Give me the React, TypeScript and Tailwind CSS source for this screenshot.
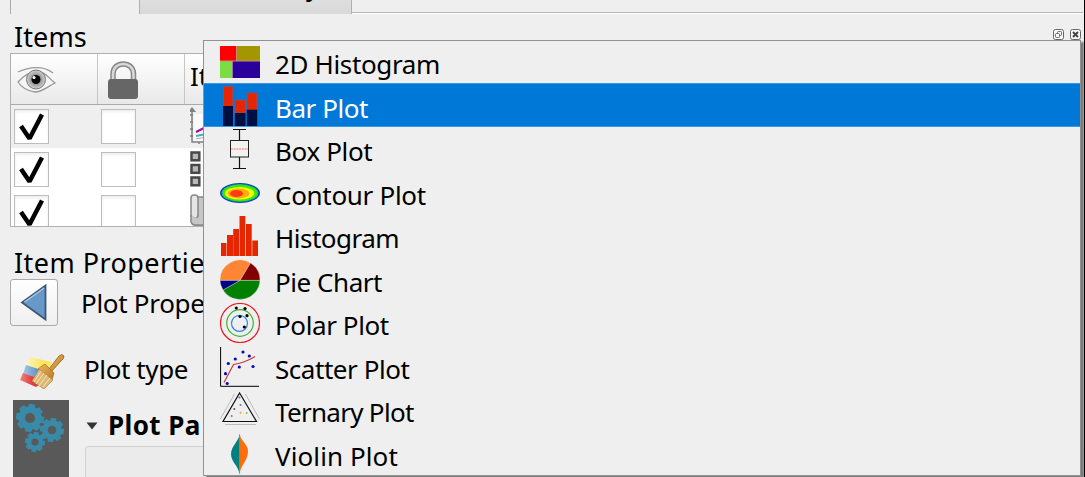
import type { ReactNode } from 'react';

function Icon({ children }: { children: ReactNode }) {
  return (
    <svg width="40" height="40" viewBox="0 0 40 40" className="mt-px shrink-0" fill="none">
      {children}
    </svg>
  );
}

const histogram2d = (
  <Icon>
    <rect y="4" width="40" height="32" fill="#c98c70" />
    <rect y="4" width="16" height="14.5" fill="#ff0000" />
    <rect x="17" y="4" width="23" height="14.5" fill="#a39600" />
    <rect y="19.5" width="11.7" height="16.5" fill="#79dd43" />
    <rect x="11.7" y="19.5" width="1" height="16.5" fill="#c8b5cc" />
    <rect x="12.7" y="19.5" width="27.3" height="16.5" fill="#29009c" />
  </Icon>
);
const bar = (
  <Icon>
    <g fill="#e52600" stroke="#95506a" strokeWidth=".7">
      <rect x="3.3" y=".4" width="9.5" height="20" />
      <rect x="15" y="14" width="10.3" height="13" />
      <rect x="27" y="7" width="10" height="17" />
    </g>
    <g fill="#000f42">
      <rect x="3" y="20" width="10" height="20" />
      <rect x="14.8" y="27" width="10.7" height="13" />
      <rect x="26.8" y="23.7" width="10.4" height="16.3" />
    </g>
  </Icon>
);
const box = (
  <Icon>
    <path d="M13 .5h13M19.5 .5v11M19.5 28v11.500M13 39.500h13" stroke="#111" strokeWidth="1.2" />
    <rect x="10.500" y="11.500" width="18" height="16.500" fill="#f4f1f1" stroke="#222" />
    <path d="M11 27.500h17" stroke="#888" />
    <path d="M11 20h17" stroke="#ff7777" strokeDasharray="2.200 .5" />
  </Icon>
);
const contour = (
  <Icon>
    <ellipse cx="20" cy="20" rx="20" ry="10" fill="#173bb5" />
    <ellipse cx="20" cy="20" rx="18.500" ry="8.900" fill="#16b989" />
    <ellipse cx="20" cy="20" rx="17.300" ry="8.200" fill="#30ee00" />
    <ellipse cx="19.600" cy="20.300" rx="14.700" ry="6.300" fill="#faff00" />
    <ellipse cx="18.500" cy="20.500" rx="11" ry="4.900" fill="#ffac13" />
    <ellipse cx="16.500" cy="20.500" rx="6.500" ry="3.600" fill="#ff3d10" />
  </Icon>
);
const histogram = (
  <Icon>
    <g fill="#e52600">
      <rect x="1" y="27" width="5.500" height="13" />
      <rect x="7" y="19" width="6" height="21" />
      <rect x="13.200" y="13" width="5.800" height="27" />
      <rect x="19.500" y="0" width="5.800" height="40" />
      <rect x="26" y="8" width="5.700" height="32" />
      <rect x="32.300" y="24.500" width="5.700" height="15.500" />
    </g>
  </Icon>
);
const pie = (
  <Icon>
    <g stroke="#efefef" strokeWidth=".35">
      <path d="M20 20.400H0A20 20 0 0 1 30.500 3Z" fill="#ff8534" />
      <path d="M20 20.400 30.500 3A20 20 0 0 1 40 20.400Z" fill="#800000" />
      <path d="M20 20.400H40A20 20 0 0 1 3 30Z" fill="#008000" />
      <path d="M20 20.400 3 30A20 20 0 0 1 0 20.400Z" fill="#000080" />
    </g>
  </Icon>
);
const polar = (
  <Icon>
    <circle cx="20" cy="20" r="19.500" stroke="#ee1823" strokeWidth="1.2" />
    <circle cx="20" cy="20" r="13.300" stroke="#38b52a" strokeWidth="1.2" />
    <circle cx="19.500" cy="20.300" r="8" stroke="#347fea" strokeWidth="1.2" />
    <g fill="#000">
      <circle cx="16.300" cy="5" r="1.600" />
      <circle cx="25" cy="5.600" r="1.600" />
      <circle cx="20" cy="13.500" r="1.600" />
      <circle cx="27" cy="12.700" r="1.600" />
      <circle cx="24.300" cy="24" r="1.600" />
    </g>
  </Icon>
);
const scatter = (
  <Icon>
    <path d="M.6 0v39.300H39" stroke="#000" />
    <path d="M4 35.500 13.500 17.500C21 16 26 15 35 9.500" stroke="#c93b3b" strokeWidth="1.200" />
    <g fill="#0808ba">
      <circle cx="7.200" cy="36.500" r="1.600" />
      <circle cx="5.500" cy="26.700" r="1.600" />
      <circle cx="8.300" cy="16.500" r="1.600" />
      <circle cx="15.300" cy="12" r="1.600" />
      <circle cx="23" cy="5" r="1.600" />
      <circle cx="29.300" cy="9" r="1.600" />
      <circle cx="19.300" cy="20" r="1.600" />
      <circle cx="33" cy="19.500" r="1.600" />
    </g>
  </Icon>
);
const ternary = (
  <Icon>
    <path d="M19.600 3 36.500 31.500H3Z" stroke="#111" strokeWidth="1.200" />
    <path d="M14.500 4 .3 29M25.500 4 39.500 29M5 34.500h31" stroke="#999" strokeWidth=".6" />
    <g>
      <circle cx="19.400" cy="7.500" r="1" fill="#bf36bd" />
      <circle cx="20.500" cy="15" r="1" fill="#4389bc" />
      <circle cx="14.300" cy="19" r="1" fill="#555" />
      <circle cx="20.500" cy="22.700" r="1" fill="#ffa030" />
      <circle cx="26.700" cy="23" r="1" fill="#72cf43" />
      <circle cx="11.700" cy="26" r="1" fill="#f34b4b" />
    </g>
  </Icon>
);
const violin = (
  <Icon>
    <path d="M19.600 0C19 7 11 12 11 20C11 28 18 31 19.600 40Z" fill="#008080" />
    <path d="M19.600 0C20.500 7 28 10 28 17C28 27 20.500 31 19.600 40Z" fill="#ff6d08" />
    <path d="M19.600 0v40" stroke="#777" strokeWidth=".6" />
  </Icon>
);

const items = [
  { name: '2D Histogram', icon: histogram2d, tracking: 'tracking-[-0.35px]' },
  { name: 'Bar Plot', icon: bar, tracking: 'tracking-[-0.45px]' },
  { name: 'Box Plot', icon: box, tracking: 'tracking-[-0.35px]' },
  { name: 'Contour Plot', icon: contour, tracking: 'tracking-[-0.3px]' },
  { name: 'Histogram', icon: histogram, tracking: 'tracking-[-0.5px]' },
  { name: 'Pie Chart', icon: pie, tracking: 'tracking-[-0.45px]' },
  { name: 'Polar Plot', icon: polar, tracking: 'tracking-[-0.4px]' },
  { name: 'Scatter Plot', icon: scatter, tracking: 'tracking-[-0.45px]' },
  { name: 'Ternary Plot', icon: ternary, tracking: 'tracking-[-0.7px]' },
  { name: 'Violin Plot', icon: violin, tracking: 'tracking-[0.1px]' },
];

function PlotMenu() {
  return (
    <div className="absolute left-[203px] top-[40px] h-[436px] w-[878px] border border-[#929292] bg-[#efefef] shadow-[3px_2px_2px_#777]">
      <ul className="-mt-[1.2px]">
        {items.map(({ name, icon, tracking }) => (
          <li
            key={name}
            className={
              name === 'Bar Plot'
                ? 'flex h-[43.5px] items-center border-y border-[#3797e1] bg-[#0078d8] pl-4 text-white'
                : 'flex h-[43.5px] items-center pl-4'
            }
          >
            {icon}
            <span className={`ml-[15px] mt-[5px] text-[26px] leading-8 ${tracking}`}>{name}</span>
          </li>
        ))}
      </ul>
    </div>
  );
}

function Eye() {
  return (
    <svg width="40" height="30" viewBox="0 0 40 30" className="ml-[6px] mt-[11px]" fill="none">
      <defs>
        <radialGradient id="iris">
          <stop offset=".2" stopColor="#777" />
          <stop offset="1" stopColor="#d2d2d2" />
        </radialGradient>
      </defs>
      <path d="M1 17C8 9 15 6 22 7C29 7 31 13 38 18C30 22 25 27 18 27C10 26 5 23 1 17Z" fill="#f5f5f5" stroke="#969996" strokeWidth="1.300" />
      <path d="M1 7C12 2 26 0 36 8" stroke="#999b99" strokeWidth="1.300" />
      <circle cx="19" cy="14.500" r="9.500" fill="url(#iris)" stroke="#777" />
      <circle cx="19" cy="14.500" r="4.500" fill="#060606" />
      <circle cx="17" cy="12.500" r="1.600" fill="#fff" />
    </svg>
  );
}

function Lock() {
  return (
    <svg width="32" height="40" viewBox="0 0 32 40" className="ml-[10px] mt-[7px]" fill="none">
      <path d="M5 20V13C5 -.5 25.500 -.5 25.500 13V20" stroke="#888" strokeWidth="5.500" />
      <path d="M5 20V13C5 -.5 25.500 -.5 25.500 13V20" stroke="#d9d9d9" strokeWidth="2.500" />
      <rect y="18" width="30" height="20" rx="3" fill="#666" />
    </svg>
  );
}

function Check({ on }: { on?: boolean }) {
  return (
    <div className="mt-[4px] size-[35px] shrink-0 border border-[#bdbdbd] bg-white shadow-[inset_0_2px_3px_#eee]">
      {on && (
        <svg width="33" height="33" viewBox="0 0 33 33" fill="none">
          <path d="M6 16 14.500 28.500 27 4.500" stroke="#000" strokeWidth="4.5" strokeLinejoin="bevel" />
        </svg>
      )}
    </div>
  );
}

const axes = (
  <svg width="30" height="40" viewBox="0 0 30 40" fill="none">
    <rect x="4" y="9" width="20" height="27" fill="#fafafa" />
    <path d="M2 5v32h24M0 10h3M0 17h3M0 24h3M0 31h3M9 37v2" stroke="#808080" strokeWidth="1.500" />
    <path d="m2 2 4 5H-2Z" fill="#808080" />
    <path d="m6 27 10-5" stroke="#9c149c" strokeWidth="2" />
    <path d="m6 31 10-2" stroke="#4aabb9" strokeWidth="2" />
    <path d="m6 34 10-2" stroke="#aaa" />
  </svg>
);
const legend = (
  <svg width="16" height="40" viewBox="0 0 16 40" fill="#b8b8b8" stroke="#484848" strokeWidth="2.500">
    <rect x="1.500" y="4.500" width="7.800" height="7.800" />
    <rect x="1.500" y="17" width="7.800" height="7.800" />
    <rect x="1.500" y="29.500" width="7.800" height="7.800" />
  </svg>
);
const scroll = (
  <svg width="20" height="40" viewBox="0 0 20 40" fill="#c6c6c6" stroke="#888" strokeWidth="1.500">
    <rect x="2" y="6" width="22" height="28" rx="3" />
    <rect x="1" y="4" width="7" height="23" rx="3" fill="#e5e5e5" />
    <path d="M1 24v7q1 3 4 3h16" />
  </svg>
);

function ItemRow({ icon, shaded }: { icon: ReactNode; shaded?: boolean }) {
  return (
    <div className={shaded ? 'flex h-[43px] shrink-0 bg-[#efefef] pl-[3px]' : 'flex h-[43px] shrink-0 bg-white pl-[3px]'}>
      <Check on />
      <div className="ml-[52px]">
        <Check />
      </div>
      <div className="ml-[54px]">{icon}</div>
    </div>
  );
}

function ItemTable() {
  return (
    <div className="ml-[10px] flex h-[174px] w-[1070px] flex-col overflow-hidden border border-[#b0b0b0] bg-white">
      <div className="flex h-[51px] shrink-0 border-b border-[#aaa] bg-linear-to-b from-white to-[#e9e9e9]">
        <div className="w-[87px] border-r border-[#c6c6c6]"><Eye /></div>
        <div className="w-[87px] border-r border-[#c6c6c6]"><Lock /></div>
        <span className="pl-[5px] pt-[6px] text-[26px] leading-8">It</span>
      </div>
      <ItemRow icon={axes} shaded />
      <ItemRow icon={legend} />
      <ItemRow icon={scroll} />
    </div>
  );
}

function Brush() {
  return (
    <svg width="46" height="40" viewBox="0 0 46 40" className="-mt-px ml-5 shrink-0" fill="none">
      <defs>
        <linearGradient id="wood" x2="1" y2="1">
          <stop stopColor="#edb862" />
          <stop offset="1" stopColor="#b97823" />
        </linearGradient>
        <linearGradient id="yellow">
          <stop stopColor="#fff3c6" />
          <stop offset=".6" stopColor="#ffe75c" />
        </linearGradient>
        <linearGradient id="blue">
          <stop stopColor="#a9c8e4" />
          <stop offset=".6" stopColor="#5b92cc" />
        </linearGradient>
        <linearGradient id="red">
          <stop stopColor="#ee8580" />
          <stop offset=".5" stopColor="#e33a3d" />
        </linearGradient>
      </defs>
      <path d="m9 6 23 5-4 10-22-7Z" fill="url(#yellow)" />
      <path d="m6 14 22 7-5 9L3 23Z" fill="url(#blue)" />
      <path d="m3 22 22 8-9 6L0 29Z" fill="url(#red)" />
      <path d="M29 18 39 5q3-3 5 0 0 3-3 5L31 21Z" fill="url(#wood)" stroke="#996018" strokeWidth=".8" />
      <path d="m22 15 3-2 9 9-2 7-14-11Z" fill="url(#wood)" stroke="#a36a24" strokeWidth=".7" />
      <path d="m19 18 14 11-9 9-12-8Z" fill="#dcb875" stroke="#b18345" strokeWidth=".7" />
      <path d="m21 20-7 11m10-9-8 11m11-9-8 11m11-8-7 9" stroke="#fff0c3" strokeWidth=".8" />
    </svg>
  );
}

function Gear({ x, y, r }: { x: number; y: number; r: number }) {
  return (
    <g transform={`translate(${x} ${y}) scale(${r / 14})`}>
      {[0, 45, 90, 135].map((a) => (
        <path key={a} d="M-3 -14h6l1 5v18l-1 5h-6l-1-5V-9Z" fill="#388aa8" transform={`rotate(${a + 8})`} />
      ))}
      <circle r="11.500" fill="#388aa8" />
      <circle r="5" fill="#595959" />
    </g>
  );
}

export default function App() {
  return (
    <div className="relative flex h-[477px] w-[1085px] flex-col overflow-hidden border-r border-black bg-[#efefef] font-['Noto_Sans','Open_Sans',sans-serif] text-black">
      <div className="flex h-[14px] shrink-0 pl-[10px]">
        <div className="w-[129px] border-l border-[#aaa]" />
        <div className="w-[213px] overflow-hidden border-x border-[#b0b0b0] bg-linear-to-b from-[#dedede] to-[#d9d9d9]">
          <span className="-mt-[30px] ml-[166px] block text-[26px] leading-8">y</span>
        </div>
        <div className="mr-px h-[13px] flex-1 border-b border-[#b5b5b5] shadow-[0_1px_0_#fff]" />
      </div>
      <div className="flex h-[39px] shrink-0 pl-[14px]">
        <h2 className="mt-[7px] text-[27px] leading-8 tracking-[0.1px]">Items</h2>
        <div className="ml-auto mr-[3px] mt-[15px] flex gap-[6px]">
          <svg width="11" height="11" viewBox="0 0 11 11" fill="#f8f8f8" stroke="#666">
            <rect x=".5" y=".5" width="10" height="10" rx="2" />
            <rect x="4.500" y="2.500" width="4" height="4" rx="1" />
            <rect x="2.500" y="4.500" width="4" height="4" rx="1" />
          </svg>
          <svg width="11" height="11" viewBox="0 0 11 11" fill="#f8f8f8" stroke="#666">
            <rect x=".5" y=".5" width="10" height="10" rx="2" />
            <path d="m3 3 5 5m0-5L3 8" stroke="#444" strokeWidth="2" />
          </svg>
        </div>
      </div>
      <ItemTable />
      <h2 className="ml-[14px] mt-5 h-8 shrink-0 whitespace-nowrap text-[27px] leading-8 tracking-[0.45px]">Item Propertie</h2>
      <div className="flex h-[48px] shrink-0 pl-[10px]">
        <button className="h-[47px] w-[48px] rounded-[3px] border border-[#aaa] bg-linear-to-b from-white to-[#efefef]">
          <svg width="46" height="45" viewBox="0 0 46 45">
            <path d="M11 22.500 34.500 5.500V39.500Z" fill="#6699ca" stroke="#40586f" strokeWidth="1.800" />
            <path d="M13.500 22 33 8" fill="none" stroke="#a8c7e5" strokeWidth="1.500" />
          </svg>
        </button>
        <span className="ml-[23px] mt-[8px] text-[26px] leading-8 tracking-[-0.3px]">Plot Prope</span>
      </div>
      <div className="mt-[25px] flex h-[48px] shrink-0">
        <Brush />
        <span className="ml-[18px] mt-[1px] text-[26px] leading-8 tracking-[-0.4px]">Plot type</span>
      </div>
      <div className="flex h-[77px] shrink-0 pl-[13px]">
        <div className="w-14 shrink-0 bg-[#595959]">
          <svg width="56" height="77" viewBox="0 0 56 77">
            <Gear x={17} y={18} r={14} />
            <Gear x={39} y={30} r={12} />
            <Gear x={22} y={42} r={10} />
          </svg>
        </div>
        <div className="ml-4 flex-1">
          <div className="flex h-[46px] items-center">
            <svg width="12" height="8" viewBox="0 0 12 8" className="ml-[1px] mt-[5px]">
              <path d="M.5 .5h11L6 7.500Z" fill="#333" />
            </svg>
            <span className="ml-[10px] mt-[4px] text-[26px] font-bold leading-8 tracking-[0.4px]">Plot Pa</span>
          </div>
          <div className="h-10 rounded-tl-[3px] border border-[#d2d2d2] bg-[#ebebeb]" />
        </div>
      </div>
      <PlotMenu />
    </div>
  );
}
